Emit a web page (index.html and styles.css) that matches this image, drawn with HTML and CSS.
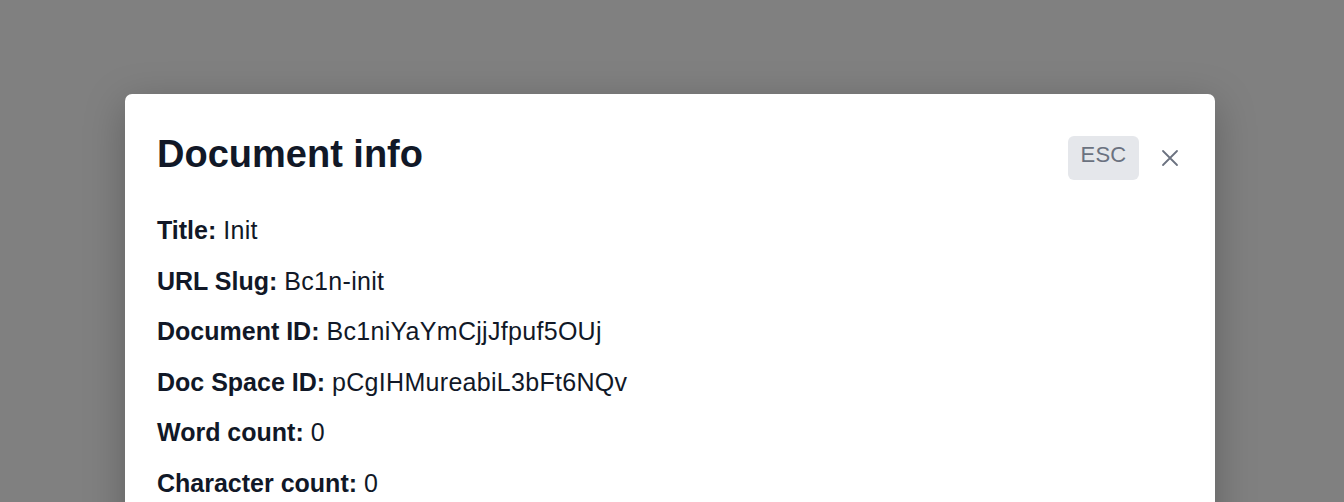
FILE: index.html
```html
<!DOCTYPE html>
<html lang="en">
<head>
<meta charset="utf-8">
<title>Document info</title>
<link rel="stylesheet" href="styles.css">
</head>
<body>
<div class="backdrop">
  <div class="modal" role="dialog" aria-labelledby="dlg-title">
    <div class="modal-header">
      <h2 id="dlg-title" class="modal-title">Document info</h2>
      <div class="header-actions">
        <kbd class="esc-badge">ESC</kbd>
        <button class="close-btn" aria-label="Close">
          <svg width="18" height="18" viewBox="0 0 18 18" fill="none" stroke="currentColor" stroke-width="1.8" stroke-linecap="round"><path d="M2 2 L16 16 M16 2 L2 16"/></svg>
        </button>
      </div>
    </div>
    <div class="info-list">
      <p class="info-row"><strong>Title:</strong> <span class="info-value">Init</span></p>
      <p class="info-row"><strong>URL Slug:</strong> <span class="info-value">Bc1n-init</span></p>
      <p class="info-row"><strong>Document ID:</strong> <span class="info-value">Bc1niYaYmCjjJfpuf5OUj</span></p>
      <p class="info-row"><strong>Doc Space ID:</strong> <span class="info-value">pCgIHMureabiL3bFt6NQv</span></p>
      <p class="info-row"><strong>Word count:</strong> <span class="info-value">0</span></p>
      <p class="info-row"><strong>Character count:</strong> <span class="info-value">0</span></p>
    </div>
  </div>
</div>
</body>
</html>
```
FILE: styles.css
```css
html, body {
  margin: 0;
  padding: 0;
  height: 100%;
  overflow: hidden;
}
body {
  background: #808080;
  font-family: "Liberation Sans", Arial, Helvetica, sans-serif;
  color: #111827;
}
.backdrop {
  padding: 94px 0 0 125px;
}
.modal {
  width: 1090px;
  height: 600px;
  box-sizing: border-box;
  background: #ffffff;
  border-radius: 7px;
  box-shadow: 0 10px 40px rgba(0, 0, 0, 0.25);
  padding: 37px 32px 32px 32px;
}
.modal-header {
  display: flex;
  align-items: center;
  justify-content: space-between;
  height: 46px;
}
.modal-title {
  margin: 0;
  font-size: 38px;
  line-height: 46px;
  font-weight: 700;
  color: #111827;
}
.header-actions {
  display: flex;
  align-items: center;
  gap: 18px;
  margin-top: 8px;
}
.esc-badge {
  display: flex;
  align-items: center;
  justify-content: center;
  width: 71px;
  height: 44px;
  box-sizing: border-box;
  background: #e5e7eb;
  border-radius: 6px;
  font-family: "Liberation Sans", Arial, sans-serif;
  font-size: 22px;
  letter-spacing: 0.3px;
  color: #6b7280;
  padding-bottom: 6px;
}
.close-btn {
  display: flex;
  align-items: center;
  justify-content: center;
  width: 26px;
  height: 26px;
  padding: 0;
  border: 0;
  background: transparent;
  color: #6b7280;
  cursor: pointer;
}
.info-list {
  display: flex;
  flex-direction: column;
  margin-top: 28px;
}
.info-row {
  margin: 0;
  font-size: 25px;
  line-height: 50.6px;
  color: #111827;
}
.info-row strong {
  font-weight: 700;
}
.info-value {
  letter-spacing: 0.3px;
}
```
